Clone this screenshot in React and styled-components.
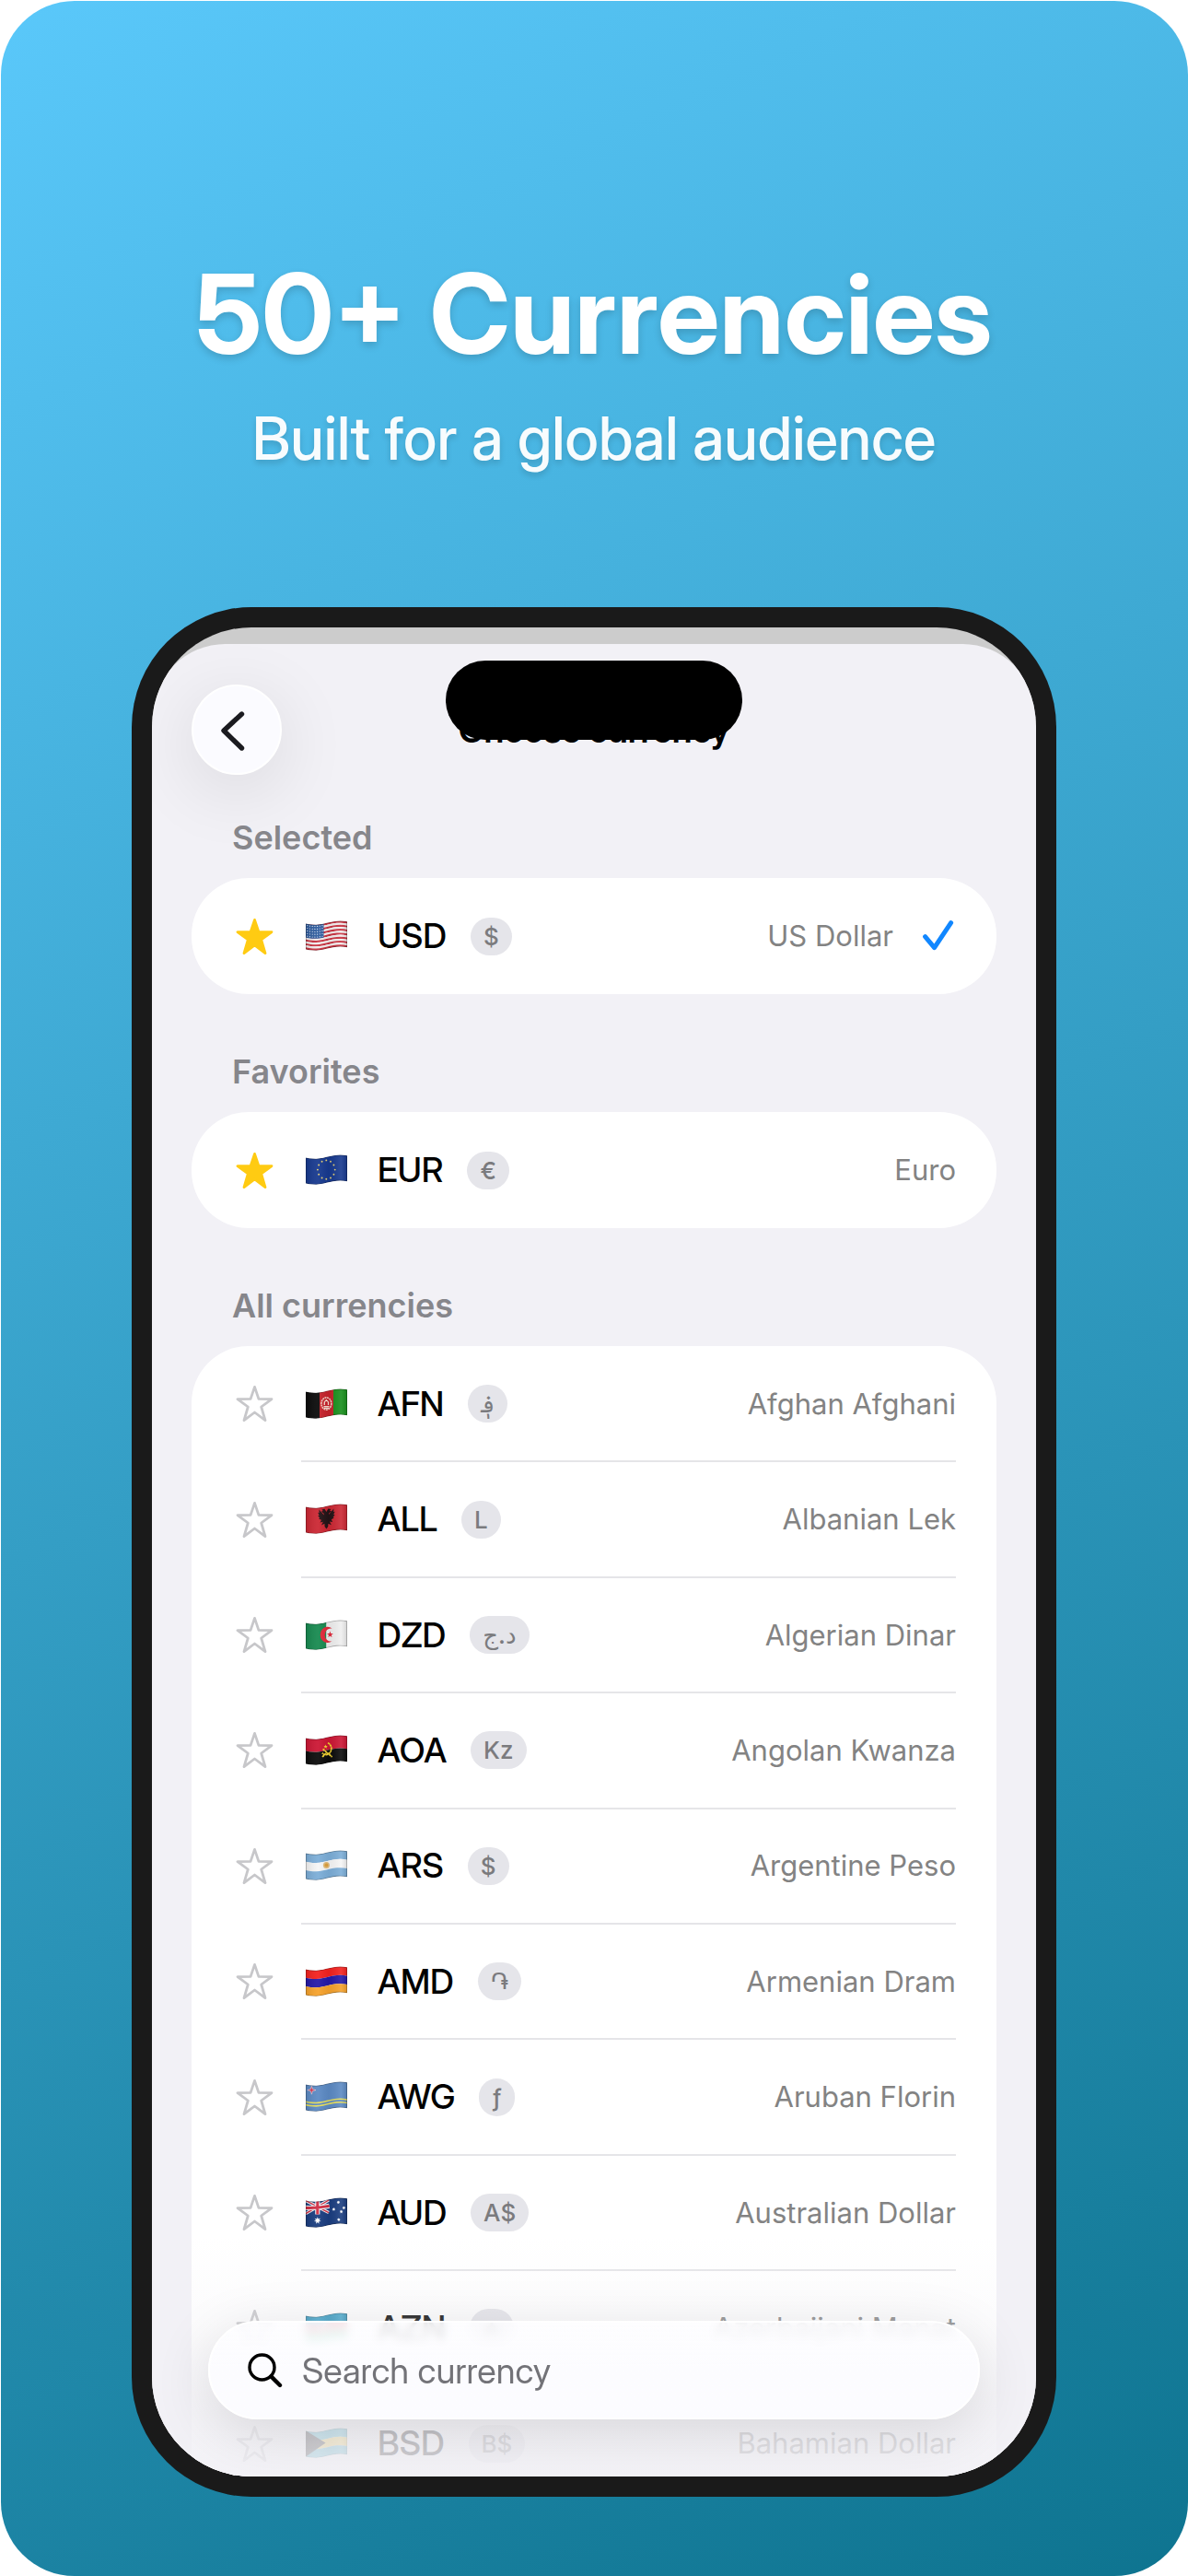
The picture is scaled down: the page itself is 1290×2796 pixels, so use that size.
import React, { useState } from 'react';
import styled, { createGlobalStyle } from 'styled-components';

const displayFont = '"Inter Display", Inter, "Noto Sans", "DejaVu Sans", sans-serif';

const GlobalStyle = createGlobalStyle`
  *, *::before, *::after { box-sizing: border-box; }
  body {
    margin: 0;
    background: #ffffff;
    font-family: Inter, "Noto Sans", "DejaVu Sans", sans-serif;
  }
  h1, h2, p, ul { margin: 0; padding: 0; }
  button, input { font: inherit; }
`;

/* ---------- page ---------- */

const Page = styled.main`
  min-height: 100vh;
  padding: 1px 0 0 1px;
  display: flex;
`;

const Poster = styled.div`
  flex: 1;
  display: flex;
  flex-direction: column;
  align-items: center;
  padding: 268px 143px 86px 142px;
  border-radius: 80px;
  background: linear-gradient(155deg, #5ac8fa, #0e7490);
`;

const Headline = styled.h1`
  font-family: ${displayFont};
  font-size: 120px;
  line-height: 144px;
  font-weight: 700;
  color: #ffffff;
  white-space: nowrap;
  text-shadow: 0 4px 8px rgba(0, 0, 0, 0.16);
`;

const Tagline = styled.p`
  margin-top: 23px;
  font-family: ${displayFont};
  font-size: 65px;
  line-height: 80px;
  font-weight: 500;
  color: rgba(255, 255, 255, 0.96);
  white-space: nowrap;
  text-shadow: 0 4px 6px rgba(0, 0, 0, 0.14);
`;

/* ---------- phone ---------- */

const Phone = styled.div`
  width: 100%;
  aspect-ratio: 1004 / 2051;
  margin-top: 143px;
  padding: 22px;
  border-radius: 130px;
  background: #1a1a1a;
  overflow: hidden;
  display: flex;
`;

const Screen = styled.div`
  position: relative;
  flex: 1;
  min-height: 0;
  padding-top: 18px;
  border-radius: 108px;
  background: #cccccc;
  overflow: hidden;
  display: flex;
`;

const Island = styled.div`
  position: absolute;
  z-index: 3;
  top: 36px;
  left: 50%;
  width: 322px;
  height: 86px;
  transform: translateX(-50%);
  border-radius: 43px;
  background: #000000;
`;

const Sheet = styled.div`
  flex: 1;
  min-width: 0;
  min-height: 0;
  padding: 44px 43px 0;
  border-radius: 80px 80px 0 0;
  background: #f2f1f6;
  overflow: hidden;
`;

const NavBar = styled.header`
  display: grid;
  grid-template-columns: 98px 1fr 98px;
  align-items: center;
`;

const NavTitle = styled.h2`
  font-family: ${displayFont};
  font-size: 38px;
  line-height: 48px;
  font-weight: 600;
  color: #000000;
  text-align: center;
`;

const BackButton = styled.button`
  width: 98px;
  height: 98px;
  padding: 0;
  display: grid;
  place-items: center;
  border: 2px solid #ffffff;
  border-radius: 50%;
  background: #fbfbff;
  box-shadow: 0 16px 80px rgba(0, 0, 0, 0.11);
`;

/* ---------- lists ---------- */

const Section = styled.section`
  margin-top: ${(p) => (p.$first ? '44px' : '60px')};
`;

const SectionTitle = styled.h2`
  padding: 0 44px;
  font-size: 36px;
  line-height: 48px;
  font-weight: 600;
  color: #86868b;
`;

const Card = styled.ul`
  margin-top: 20px;
  min-height: ${(p) => (p.$open ? '1254px' : '126px')};
  list-style: none;
  display: flex;
  flex-direction: column;
  border-radius: ${(p) => (p.$open ? '62px 62px 0 0' : '62px')};
  background: #ffffff;
`;

const Row = styled.li`
  flex: 1;
  padding: 0 44px 0 48px;
  display: flex;
  align-items: center;
  gap: 30px;
`;

const StarButton = styled.button`
  width: 41px;
  height: 41px;
  flex: none;
  padding: 0;
  border: 0;
  background: none;
  display: block;
`;

const RowBody = styled.div`
  flex: 1;
  align-self: stretch;
  display: flex;
  align-items: center;
  padding-left: 5px;
  box-shadow: ${(p) => (p.$divided ? '0 1px #e5e5e8, inset 0 -1px #e5e5e8' : 'none')};
`;

const Code = styled.span`
  margin-left: 33px;
  font-family: ${displayFont};
  font-size: 37px;
  line-height: 48px;
  font-weight: 500;
  color: #000000;
`;

const Chip = styled.span`
  margin-left: 26px;
  min-width: 36px;
  height: 41px;
  padding: 0 14px;
  border-radius: 21px;
  background: #e5e5ea;
  color: #7b7b7e;
  font-size: 26px;
  line-height: 41px;
  font-weight: 500;
  text-align: center;
`;

const Name = styled.span`
  flex: 1;
  font-size: 31px;
  line-height: 40px;
  color: #838383;
  text-align: right;
`;

const CheckSlot = styled.span`
  margin-left: 32px;
  display: flex;
`;

/* ---------- search ---------- */

const BottomFade = styled.div`
  position: absolute;
  z-index: 1;
  left: 0;
  right: 0;
  bottom: 0;
  height: 260px;
  pointer-events: none;
  background: linear-gradient(
    rgba(242, 241, 246, 0),
    rgba(242, 241, 246, 0.25) 36%,
    rgba(242, 241, 246, 0.76) 72%,
    rgba(242, 241, 246, 0.88)
  );
`;

const SearchBar = styled.label`
  position: absolute;
  z-index: 2;
  left: 61px;
  right: 61px;
  bottom: 62px;
  height: 107px;
  padding: 0 41px;
  display: flex;
  align-items: center;
  gap: 21px;
  border: 2px solid #ffffff;
  border-radius: 54px;
  background: linear-gradient(rgba(253, 253, 255, 0.84), rgba(252, 252, 255, 0.99) 46%);
  backdrop-filter: blur(5px);
  box-shadow: 0 14px 64px rgba(0, 0, 0, 0.12);
`;

const SearchInput = styled.input`
  flex: 1;
  min-width: 0;
  padding: 0;
  border: 0;
  outline: 0;
  background: none;
  font-family: ${displayFont};
  font-size: 38px;
  line-height: 48px;
  color: #000000;
  &::placeholder {
    color: #737378;
    opacity: 1;
  }
`;

/* ---------- icons ---------- */

const ChevronIcon = () => (
  <svg width="94" height="94" viewBox="0 0 94 94" fill="none" aria-hidden="true">
    <path d="M52.5 30 L33 48 L52.5 67" stroke="#1b1b20" strokeWidth="5.4" strokeLinecap="round" strokeLinejoin="round" />
  </svg>
);

const StarIcon = ({ filled }) => (
  <svg width="41" height="41" viewBox="0 0 41 41" aria-hidden="true">
    <path
      d="M20.5 2.4 L24.9 15.4 L39 15.6 L27.7 24 L32 38.6 L20.5 30 L9 38.6 L13.3 24 L2 15.6 L16.1 15.4 Z"
      fill={filled ? '#ffcb12' : 'none'}
      stroke={filled ? '#ffcb12' : '#c7c7ca'}
      strokeWidth="2.8"
      strokeLinejoin="round"
    />
  </svg>
);

const CheckIcon = () => (
  <svg width="36" height="36" viewBox="0 0 36 36" fill="none" aria-hidden="true">
    <path d="M2.6 18.6 L12.6 30.6 L30.6 3.6" stroke="#1187ff" strokeWidth="5" strokeLinecap="round" strokeLinejoin="round" />
  </svg>
);

const SearchIcon = () => (
  <svg width="38" height="38" viewBox="0 0 38 38" fill="none" aria-hidden="true">
    <circle cx="15.5" cy="15.5" r="13.5" stroke="#000" strokeWidth="3.4" />
    <path d="M25.4 25.4 L35 35" stroke="#000" strokeWidth="4.4" strokeLinecap="round" />
  </svg>
);

/* ---------- flags: a waving cloth 45 wide and 28 tall ---------- */

const lift = (x) => 2.6 + 2.1 * Math.cos(((x - 10) / 54) * 2 * Math.PI);

const cloth = (y0, y1, x0 = 0, x1 = 45) => {
  const xs = Array.from({ length: 13 }, (_, i) => x0 + ((x1 - x0) * i) / 12);
  const point = (x, y) => `${x.toFixed(2)} ${(lift(x) + y).toFixed(2)}`;
  const top = xs.map((x) => point(x, y0));
  const bottom = [...xs].reverse().map((x) => point(x, y1));
  return `M${[...top, ...bottom].join('L')}Z`;
};

const Bands = ({ colors }) =>
  colors.map((color, i) => (
    <path key={i} d={cloth((28 * i) / colors.length, (28 * (i + 1)) / colors.length)} fill={color} />
  ));

const starPoints = (cx, cy, r, tips = 5, inner = 0.4) =>
  Array.from({ length: tips * 2 }, (_, i) => {
    const a = (Math.PI * i) / tips - Math.PI / 2;
    const d = i % 2 ? r * inner : r;
    return `${(cx + d * Math.cos(a)).toFixed(2)},${(cy + d * Math.sin(a)).toFixed(2)}`;
  }).join(' ');

const flagArt = {
  USD: () => (
    <>
      <Bands colors={Array.from({ length: 13 }, (_, i) => (i % 2 ? '#f3eeee' : '#c9313f'))} />
      <path d={cloth(0, 15.1, 0, 19.5)} fill="#2f5c9e" />
      {Array.from({ length: 35 }, (_, i) => {
        const x = 1.8 + (i % 7) * 2.7;
        return <circle key={i} cx={x} cy={lift(x) + 1.8 + Math.floor(i / 7) * 2.9} r="0.6" fill="#e8eefa" />;
      })}
    </>
  ),
  EUR: () => (
    <>
      <path d={cloth(0, 28)} fill="#17398f" />
      {Array.from({ length: 12 }, (_, i) => {
        const a = (Math.PI * i) / 6;
        return <circle key={i} cx={22.3 + 9.4 * Math.sin(a)} cy={16.6 - 10.2 * Math.cos(a)} r="0.95" fill="#e5cf72" />;
      })}
    </>
  ),
  AFN: () => (
    <>
      <path d={cloth(0, 28, 0, 15)} fill="#0a0a0a" />
      <path d={cloth(0, 28, 15, 30)} fill="#c5222b" />
      <path d={cloth(0, 28, 30, 45)} fill="#18901c" />
      <ellipse cx="22.4" cy="16.5" rx="5.4" ry="6.6" fill="none" stroke="#f1ccc0" strokeWidth="1.6" strokeDasharray="2 0.6" />
      <path d="M19.5 19.6 h6 M20.3 18 v-3 q2.1-3.6 4.2 0 v3 M22.4 12 v2 M19.8 21.4 h5.2" fill="none" stroke="#f6ddd2" strokeWidth="1.3" />
    </>
  ),
  ALL: () => (
    <>
      <path d={cloth(0, 28)} fill="#cc2733" />
      <path
        d="M22.4 9 L20.4 5.8 L17.4 6.4 L18.8 8 L16.8 8.8 L19.6 10.8 L19.8 12.6 L14.4 6.4 L14.6 10 L13.2 9.8 L14.6 13 L13.2 13 L15.2 15.8 L14 16.4 L17 17.8 L15.6 20.4 L18.8 19.8 L17 23.6 L20.4 21.8 L20.6 25 L22.4 27.6 L24.2 25 L24.4 21.8 L27.8 23.2 L26 19.4 L29.2 20 L27.8 17.2 L30.8 15.6 L29.6 15 L31.6 12 L30.2 12 L31.6 8.8 L30.2 9 L30.4 5.4 L25 12 L25.2 10.4 L28 8.2 L26 7.4 L27.4 6 L24.4 5.4 Z"
        fill="#231316"
      />
    </>
  ),
  DZD: () => (
    <>
      <path d={cloth(0, 28, 0, 22.5)} fill="#178a50" />
      <path d={cloth(0, 28, 22.5, 45)} fill="#efefef" />
      <path d="M28.6 9.6 A8 8.6 0 1 0 28.6 23.2 A6.4 7 0 1 1 28.6 9.6 Z" fill="#e2293a" />
      <polygon points={starPoints(26.4, 16.2, 3.6)} fill="#e2293a" />
    </>
  ),
  AOA: () => (
    <>
      <Bands colors={['#cc1634', '#0b0b0b']} />
      <path d="M24 8.6 q5.6 3.6 3 9.6 q-3.4 6-9.2 1.6 M18.6 15.4 L28.6 24 M18.2 24.2 q1.8-3.2 5-4.2" fill="none" stroke="#f3d331" strokeWidth="1.7" strokeDasharray="2.6 0.4" />
      <polygon points={starPoints(21.6, 12.8, 2.4)} fill="#f3d331" />
    </>
  ),
  ARS: () => (
    <>
      <Bands colors={['#7caed8', '#f6f6f6', '#7caed8']} />
      <circle cx="22.4" cy="16.4" r="3.5" fill="#e3bb78" />
      <circle cx="22.4" cy="16.4" r="1.9" fill="#dc9f3c" />
    </>
  ),
  AMD: () => <Bands colors={['#f3221f', '#2418a8', '#f6a22c']} />,
  AWG: () => (
    <>
      <path d={cloth(0, 28)} fill="#5c8ac4" />
      <path d={cloth(18, 19.6)} fill="#e6de5c" />
      <path d={cloth(21.4, 23)} fill="#e6de5c" />
      <polygon points={starPoints(6.4, 9.6, 4.6, 4, 0.32)} fill="#d93650" stroke="#e9dfe9" strokeWidth="0.6" />
    </>
  ),
  AUD: () => (
    <>
      <path d={cloth(0, 28)} fill="#1a3d80" />
      <path d="M0 3.6 L25 16.6 M0 17.6 L25 3" stroke="#f1f1f4" strokeWidth="3.4" />
      <path d="M0 3.6 L25 16.6 M0 17.6 L25 3" stroke="#d22c42" strokeWidth="1.3" />
      <path d="M12.8 3 V18.6 M0 11.4 Q12 12 25.6 9.4" fill="none" stroke="#f1f1f4" strokeWidth="5.2" />
      <path d="M12.8 3 V18.6 M0 11.4 Q12 12 25.6 9.4" fill="none" stroke="#d22c42" strokeWidth="3" />
      <polygon points={starPoints(12.8, 25.2, 4, 7, 0.45)} fill="#ffffff" />
      {[[35.4, 5.4], [30.4, 13], [41.4, 11.4], [38.6, 15.6], [35.8, 24.2]].map(([x, y]) => (
        <polygon key={x} points={starPoints(x, y, 2, 7, 0.5)} fill="#ffffff" />
      ))}
    </>
  ),
  AZN: () => (
    <>
      <Bands colors={['#2b9cc6', '#dd3a4a', '#18b777']} />
      <circle cx="21.6" cy="16.4" r="3.6" fill="#ffffff" />
      <circle cx="22.8" cy="16.4" r="2.9" fill="#dd3a4a" />
    </>
  ),
  BSD: () => (
    <>
      <Bands colors={['#35b4cc', '#ffd94a', '#35b4cc']} />
      <path d="M0 3.2 L21.6 16.4 L0 31.4 Z" fill="#0b0b0b" />
    </>
  ),
};

const Flag = ({ code }) => {
  const Art = flagArt[code];
  return (
    <svg width="45" height="34" viewBox="0 0 45 34" role="img" aria-label={`${code} flag`}>
      <defs>
        <clipPath id={`cloth-${code}`}>
          <path d={cloth(0, 28)} />
        </clipPath>
        <linearGradient id={`shade-${code}`} x1="0" y1="0" x2="1" y2="0">
          <stop offset="0" stopColor="#000" stopOpacity="0.1" />
          <stop offset="0.3" stopColor="#fff" stopOpacity="0.06" />
          <stop offset="0.55" stopColor="#000" stopOpacity="0.05" />
          <stop offset="0.85" stopColor="#fff" stopOpacity="0.1" />
          <stop offset="1" stopColor="#000" stopOpacity="0.12" />
        </linearGradient>
      </defs>
      <g clipPath={`url(#cloth-${code})`}>
        <Art />
        <path d={cloth(0, 28)} fill={`url(#shade-${code})`} stroke="#000" strokeOpacity="0.28" strokeWidth="1.6" />
      </g>
    </svg>
  );
};

/* ---------- data ---------- */

const selected = [{ code: 'USD', symbol: '$', name: 'US Dollar' }];
const favorites = [{ code: 'EUR', symbol: '€', name: 'Euro' }];
const all = [
  { code: 'AFN', symbol: '؋', name: 'Afghan Afghani' },
  { code: 'ALL', symbol: 'L', name: 'Albanian Lek' },
  { code: 'DZD', symbol: 'د.ج', name: 'Algerian Dinar' },
  { code: 'AOA', symbol: 'Kz', name: 'Angolan Kwanza' },
  { code: 'ARS', symbol: '$', name: 'Argentine Peso' },
  { code: 'AMD', symbol: '֏', name: 'Armenian Dram' },
  { code: 'AWG', symbol: 'ƒ', name: 'Aruban Florin' },
  { code: 'AUD', symbol: 'A$', name: 'Australian Dollar' },
  { code: 'AZN', symbol: '₼', name: 'Azerbaijani Manat' },
  { code: 'BSD', symbol: 'B$', name: 'Bahamian Dollar' },
];

const CurrencySection = ({ title, items, starred, current, first, open, onToggle }) => (
  <Section $first={first}>
    <SectionTitle>{title}</SectionTitle>
    <Card $open={open}>
      {items.map(({ code, symbol, name }) => (
        <Row key={code}>
          <StarButton
            type="button"
            aria-label={`Favorite ${code}`}
            aria-pressed={starred.includes(code)}
            onClick={() => onToggle(code)}
          >
            <StarIcon filled={starred.includes(code)} />
          </StarButton>
          <RowBody $divided={items.length > 1}>
            <Flag code={code} />
            <Code>{code}</Code>
            <Chip>{symbol}</Chip>
            <Name>{name}</Name>
            {current === code && (
              <CheckSlot>
                <CheckIcon />
              </CheckSlot>
            )}
          </RowBody>
        </Row>
      ))}
    </Card>
  </Section>
);

export default function App() {
  const [starred, setStarred] = useState(['USD', 'EUR']);
  const toggle = (code) =>
    setStarred((list) => (list.includes(code) ? list.filter((c) => c !== code) : [...list, code]));
  const shared = { starred, current: 'USD', onToggle: toggle };

  return (
    <Page>
      <GlobalStyle />
      <Poster>
        <Headline>50+ Currencies</Headline>
        <Tagline>Built for a global audience</Tagline>
        <Phone>
          <Screen>
            <Sheet>
              <NavBar>
                <BackButton type="button" aria-label="Back">
                  <ChevronIcon />
                </BackButton>
                <NavTitle>Choose currency</NavTitle>
              </NavBar>
              <CurrencySection title="Selected" items={selected} first {...shared} />
              <CurrencySection title="Favorites" items={favorites} {...shared} />
              <CurrencySection title="All currencies" items={all} open {...shared} />
            </Sheet>
            <Island />
            <BottomFade />
            <SearchBar>
              <SearchIcon />
              <SearchInput type="text" placeholder="Search currency" aria-label="Search currency" />
            </SearchBar>
          </Screen>
        </Phone>
      </Poster>
    </Page>
  );
}
